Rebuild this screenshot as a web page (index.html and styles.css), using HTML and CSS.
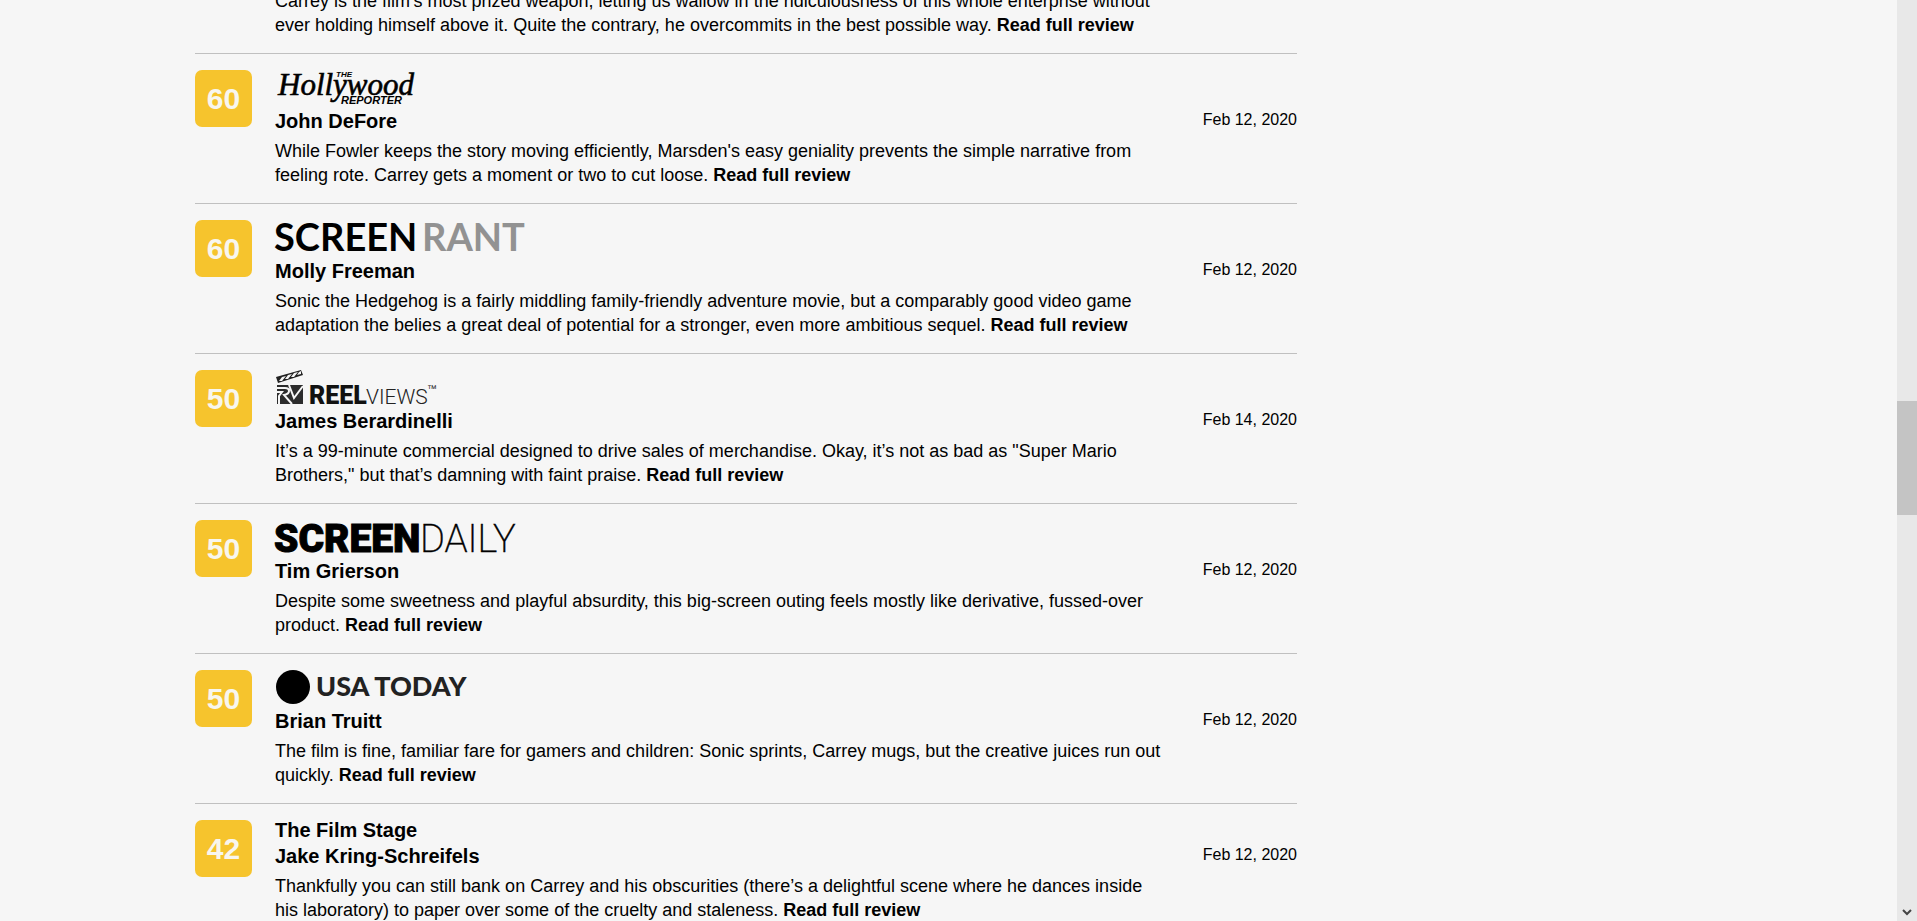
FILE: index.html
```html
<!DOCTYPE html>
<html lang="en">
<head>
<meta charset="utf-8">
<title>Critic Reviews</title>
<link rel="stylesheet" href="styles.css">
</head>
<body>
<div class="page">
  <main class="reviews">
    <article class="review review-first">
      <div class="body">
        <p class="summary">Carrey is the film's most prized weapon, letting us wallow in the ridiculousness of this whole enterprise without ever holding himself above it. Quite the contrary, he overcommits in the best possible way. <a class="more" href="#">Read full review</a></p>
      </div>
    </article>

    <article class="review">
      <div class="score">60</div>
      <div class="body">
        <svg class="logo" width="260" height="35" viewBox="0 0 260 35" role="img" aria-label="The Hollywood Reporter">
          <text class="thr-main" x="3" y="25">Hollywood</text>
          <text class="thr-small" x="61" y="7">THE</text>
          <text class="thr-sub" x="66" y="34">REPORTER</text>
        </svg>
        <div class="byline"><h3 class="name">John DeFore</h3><time class="date">Feb 12, 2020</time></div>
        <p class="summary">While Fowler keeps the story moving efficiently, Marsden's easy geniality prevents the simple narrative from feeling rote. Carrey gets a moment or two to cut loose. <a class="more" href="#">Read full review</a></p>
      </div>
    </article>

    <article class="review">
      <div class="score">60</div>
      <div class="body">
        <svg class="logo" width="260" height="35" viewBox="0 0 260 35" role="img" aria-label="Screen Rant">
          <text class="rant" x="-1" y="31">SCREEN</text>
          <text class="rant rant-gray" x="147" y="31">RANT</text>
        </svg>
        <div class="byline"><h3 class="name">Molly Freeman</h3><time class="date">Feb 12, 2020</time></div>
        <p class="summary">Sonic the Hedgehog is a fairly middling family-friendly adventure movie, but a comparably good video game adaptation the belies a great deal of potential for a stronger, even more ambitious sequel. <a class="more" href="#">Read full review</a></p>
      </div>
    </article>

    <article class="review">
      <div class="score">50</div>
      <div class="body">
        <svg class="logo" width="260" height="35" viewBox="0 0 260 35" role="img" aria-label="ReelViews">
          <path d="M1 7 26 0 28 5 3 13Z" fill="#222"/>
          <path d="M4 11 7 7 11 6 7 11ZM10 9 13 5 17 4 13 9ZM16 7 19 3 23 2 19 7ZM22 5 24 2 26 1 26 4Z" fill="#f6f6f6"/>
          <path d="M2 15H28V34H2Z" fill="#2c2c2c"/>
          <path d="M1 18H10Q14 18 14 21T9 25L17 34M1 22H7L4 26V35M14 15 19 28 28 16" fill="none" stroke="#f6f6f6" stroke-width="2"/>
          <text class="reel" x="34" y="34">REEL</text>
          <text class="views" x="91" y="34">VIEWS</text>
          <text class="tm" x="152" y="22">™</text>
        </svg>
        <div class="byline"><h3 class="name">James Berardinelli</h3><time class="date">Feb 14, 2020</time></div>
        <p class="summary">It’s a 99-minute commercial designed to drive sales of merchandise. Okay, it’s not as bad as "Super Mario Brothers," but that’s damning with faint praise. <a class="more" href="#">Read full review</a></p>
      </div>
    </article>

    <article class="review">
      <div class="score">50</div>
      <div class="body">
        <svg class="logo" width="260" height="35" viewBox="0 0 260 35" role="img" aria-label="Screen Daily">
          <text class="screen" x="-1" y="32">SCREEN</text>
          <text class="daily" x="145" y="32">DAILY</text>
        </svg>
        <div class="byline"><h3 class="name">Tim Grierson</h3><time class="date">Feb 12, 2020</time></div>
        <p class="summary">Despite some sweetness and playful absurdity, this big-screen outing feels mostly like derivative, fussed-over product. <a class="more" href="#">Read full review</a></p>
      </div>
    </article>

    <article class="review">
      <div class="score">50</div>
      <div class="body">
        <svg class="logo" width="260" height="35" viewBox="0 0 260 35" role="img" aria-label="USA Today">
          <circle cx="18" cy="17" r="17"/>
          <text class="usa" x="41" y="26">USA TODAY</text>
        </svg>
        <div class="byline"><h3 class="name">Brian Truitt</h3><time class="date">Feb 12, 2020</time></div>
        <p class="summary">The film is fine, familiar fare for gamers and children: Sonic sprints, Carrey mugs, but the creative juices run out quickly. <a class="more" href="#">Read full review</a></p>
      </div>
    </article>

    <article class="review">
      <div class="score">42</div>
      <div class="body">
        <h3 class="name source">The Film Stage</h3>
        <div class="byline"><h3 class="name">Jake Kring-Schreifels</h3><time class="date">Feb 12, 2020</time></div>
        <p class="summary">Thankfully you can still bank on Carrey and his obscurities (there’s a delightful scene where he dances inside his laboratory) to paper over some of the cruelty and staleness. <a class="more" href="#">Read full review</a></p>
      </div>
    </article>
  </main>
  <div class="scrollbar">
    <div class="thumb"></div>
    <svg class="arrow" width="10" height="8" viewBox="0 0 10 8"><path d="M1 1 5 5 9 1" fill="none" stroke="#444" stroke-width="2"/></svg>
  </div>
</div>
</body>
</html>
```
FILE: styles.css
```css
* { box-sizing: border-box; }

body {
  margin: 0;
  background: #f6f6f6;
  color: #000;
  font-family: "Liberation Sans", Arial, sans-serif;
}

.page {
  display: flex;
  height: 100vh;
  overflow: hidden;
}

.reviews {
  flex: 1;
  max-width: 1297px;
  margin-top: -11px;
  margin-right: auto;
  padding-left: 195px;
}

.review {
  display: flex;
  align-items: flex-start;
  gap: 23px;
  padding: 16px 0;
  border-bottom: 1px solid #c0c0c0;
}

.review-first {
  padding-top: 0;
  padding-left: 80px;
}

.score {
  display: flex;
  align-items: center;
  justify-content: center;
  flex: none;
  width: 57px;
  height: 57px;
  border-radius: 7px;
  background: #f6c42d;
  color: #f8f6ee;
  font-size: 30px;
  line-height: 32px;
  font-weight: bold;
}

.body { flex: 1; }

.logo {
  display: block;
  margin-bottom: 6px;
  overflow: visible;
}

.byline {
  display: flex;
  justify-content: space-between;
  margin-bottom: 8px;
}

.name {
  margin: 0;
  font-size: 20px;
  line-height: 20px;
}

.source { margin-bottom: 6px; }

.date {
  font-size: 16px;
  line-height: 18px;
}

.summary {
  margin: 0;
  padding-right: 132px;
  font-size: 18px;
  line-height: 24px;
}

.more {
  color: #000;
  font-weight: bold;
  text-decoration: none;
}

.thr-main { font: italic 31px "Liberation Serif", serif; stroke: #000; stroke-width: 0.6px; }
.thr-small { font: italic bold 8px "Liberation Sans", sans-serif; }
.thr-sub { font: italic bold 11px "Liberation Sans", sans-serif; }
.rant { font: bold 38px Lato, sans-serif; }
.rant-gray { fill: #929292; }
.reel { font: 900 25px Roboto, sans-serif; fill: #111; }
.views { font: 300 21px Roboto, sans-serif; fill: #222; }
.tm { font: 10px "Liberation Sans", sans-serif; fill: #222; }
.screen { font: 900 39px Roboto, sans-serif; stroke: #000; stroke-width: 1px; }
.daily { font: 200 38px Roboto, sans-serif; stroke: #000; stroke-width: 0.4px; }
.usa { font: 900 27px Lato, sans-serif; fill: #222; }

.scrollbar {
  display: flex;
  flex-direction: column;
  align-items: center;
  justify-content: space-between;
  width: 20px;
  padding: 401px 0 4px;
  background: #e8e8e8;
}

.thumb {
  width: 100%;
  height: 114px;
  background: #c4c4c4;
}
```
